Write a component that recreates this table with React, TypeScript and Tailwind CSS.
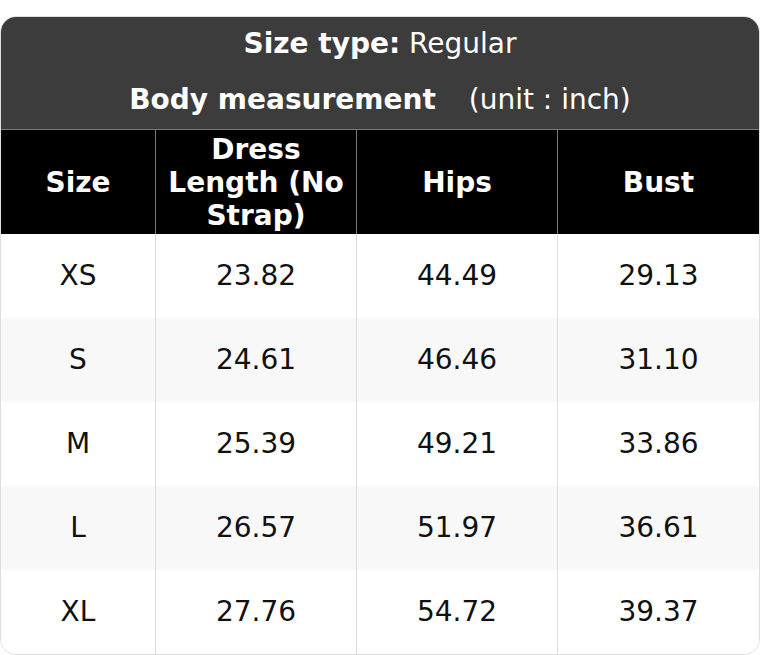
import React from "react";

const rows = [
  ["XS", "23.82", "44.49", "29.13"],
  ["S", "24.61", "46.46", "31.10"],
  ["M", "25.39", "49.21", "33.86"],
  ["L", "26.57", "51.97", "36.61"],
  ["XL", "27.76", "54.72", "39.37"],
];

export default function App() {
  return (
    <div className="w-[760px] bg-white pt-4" style={{ fontFamily: '"DejaVu Sans", sans-serif' }}>
      <div className="overflow-hidden rounded-2xl border border-[#dddddd]">
        <div className="flex h-[112px] flex-col items-center bg-[#3c3c3c] text-[28px] text-white">
          <div className="mt-[10px] leading-[34px]">
            <span className="font-bold">Size type:</span> Regular
          </div>
          <div className="mt-[22px] leading-[34px]">
            <span className="font-bold">Body measurement</span>
            <span className="ml-[33px]">(unit : inch)</span>
          </div>
        </div>
        <div className="grid grid-cols-[155px_201px_201px_1fr] border-t border-[#777777] bg-black text-[28px] font-bold leading-[33px] text-white">
          <div className="flex h-[104px] items-center justify-center border-r border-[#777777] text-center">Size</div>
          <div className="flex h-[104px] items-center justify-center border-r border-[#777777] px-2 text-center">Dress Length (No Strap)</div>
          <div className="flex h-[104px] items-center justify-center border-r border-[#777777] text-center">Hips</div>
          <div className="flex h-[104px] items-center justify-center text-center">Bust</div>
        </div>
        {rows.map((r, i) => (
          <div
            key={r[0]}
            className={`grid grid-cols-[155px_201px_201px_1fr] text-[28px] text-[#111111] ${i % 2 === 1 ? "bg-[#f8f8f8]" : "bg-white"}`}
          >
            <div className="flex h-[84px] items-center justify-center border-r border-[#dddddd]">{r[0]}</div>
            <div className="flex h-[84px] items-center justify-center border-r border-[#dddddd]">{r[1]}</div>
            <div className="flex h-[84px] items-center justify-center border-r border-[#dddddd]">{r[2]}</div>
            <div className="flex h-[84px] items-center justify-center">{r[3]}</div>
          </div>
        ))}
      </div>
    </div>
  );
}
